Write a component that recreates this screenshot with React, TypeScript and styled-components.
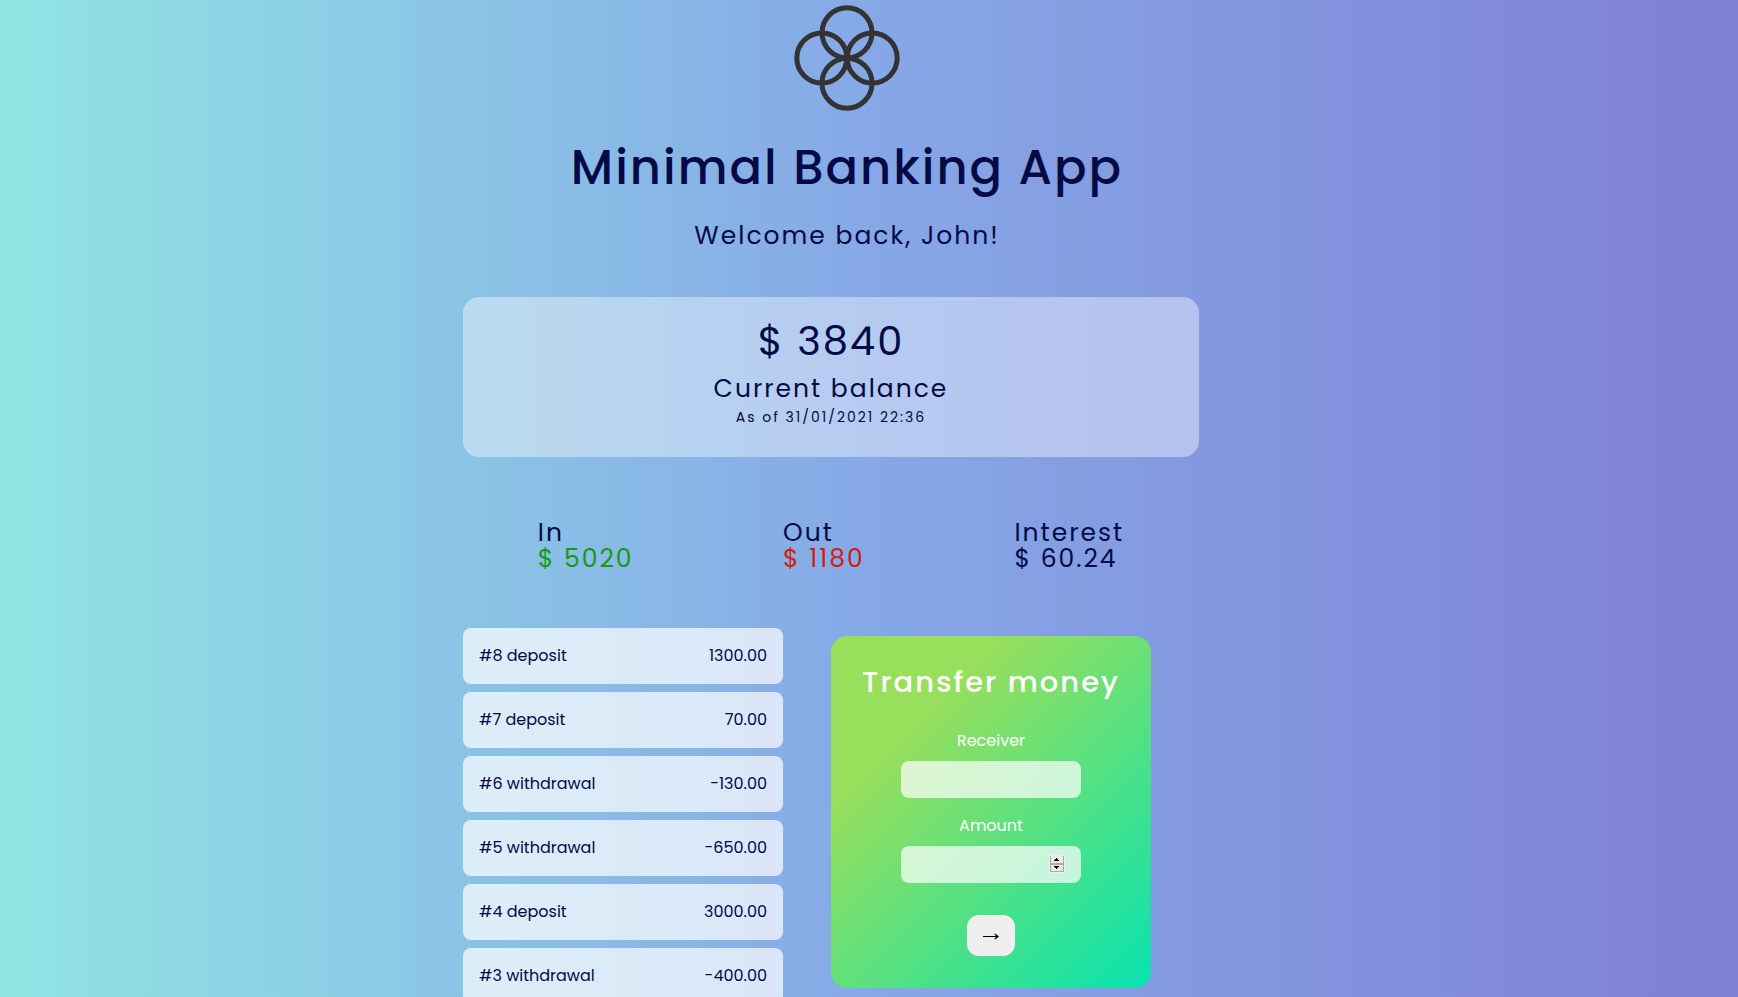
import React from 'react';
import styled, { createGlobalStyle } from 'styled-components';

const GlobalStyle = createGlobalStyle`
  *, *::before, *::after {
    box-sizing: border-box;
  }

  body {
    margin: 0;
    min-height: 100vh;
    color: #030a45;
    font-family: Poppins, 'Liberation Sans', sans-serif;
    font-size: 16px;
    line-height: 24px;
    background: linear-gradient(to right, #90e5e3, #86a8e7, #7f7fd5);
  }
`;

const Page = styled.main`
  display: flex;
  flex-direction: column;
  max-width: 812px;
  margin: 0 auto;
  padding-right: 44px;
`;

const Header = styled.header`
  display: flex;
  flex-direction: column;
  align-items: center;
  margin-bottom: 48px;
  text-align: center;
`;

const Logo = styled.svg`
  width: 116px;
  height: 116px;
  margin-bottom: 16px;
  fill: none;
  stroke: #333;
  stroke-width: 5;
`;

const Title = styled.h1`
  margin: 0 0 19px;
  font-size: 48px;
  font-weight: 500;
  line-height: 72px;
  letter-spacing: 2px;
`;

const Welcome = styled.p`
  margin: 0;
  font-size: 25px;
  line-height: 26px;
  letter-spacing: 2px;
`;

const BalanceCard = styled.section`
  min-height: 160px;
  margin-right: 32px;
  padding: 24px;
  border-radius: 16px;
  background: rgba(255, 255, 255, 0.4);
  text-align: center;
  letter-spacing: 2px;
`;

const BalanceValue = styled.p`
  margin: 0 0 15px;
  font-size: 40px;
  line-height: 40px;
`;

const BalanceLabel = styled.h2`
  margin: 0;
  font-size: 25px;
  font-weight: 400;
  line-height: 26px;
`;

const BalanceDate = styled.p`
  margin: 0;
  font-size: 14px;
  line-height: 30px;
`;

const Summary = styled.dl`
  display: flex;
  justify-content: space-around;
  margin: 63px 32px 56px 0;
  font-size: 25px;
  line-height: 26px;
  letter-spacing: 2px;
`;

const SummaryLabel = styled.dt``;

const SummaryValue = styled.dd<{ $color?: string }>`
  margin: 0;
  color: ${({ $color }) => $color ?? 'inherit'};
`;

const Columns = styled.div`
  display: grid;
  grid-template-columns: 320px 320px;
  align-items: start;
  gap: 48px;
`;

const Movements = styled.ul`
  display: flex;
  flex-direction: column;
  gap: 8px;
  margin: 0;
  padding: 0;
  list-style: none;
`;

const Movement = styled.li`
  display: flex;
  justify-content: space-between;
  padding: 16px;
  border-radius: 8px;
  background: rgba(255, 255, 255, 0.7);
`;

const TransferForm = styled.form`
  display: flex;
  flex-direction: column;
  align-items: center;
  margin-top: 8px;
  padding: 24px 24px 32px;
  border-radius: 16px;
  color: #fff;
  background: linear-gradient(135deg, #98df5b 25%, #08e2b0);
`;

const FormTitle = styled.h2`
  margin: 0 0 24px;
  font-size: 29px;
  font-weight: 500;
  line-height: 45px;
  letter-spacing: 2px;
  white-space: nowrap;
`;

const Label = styled.label`
  margin-bottom: 8px;
`;

const Field = styled.div`
  position: relative;
  width: 180px;
  margin-bottom: 16px;
`;

const Input = styled.input`
  display: block;
  width: 100%;
  height: 37px;
  padding: 8px 16px;
  border: 0;
  border-radius: 8px;
  color: #030a45;
  background: rgba(255, 255, 255, 0.7);
  font: inherit;
  appearance: textfield;

  &::-webkit-inner-spin-button {
    appearance: none;
  }
`;

const Stepper = styled.svg`
  position: absolute;
  top: 9px;
  right: 16px;
  width: 16px;
  height: 18px;
  pointer-events: none;
`;

const Submit = styled.button`
  display: flex;
  align-items: center;
  justify-content: center;
  width: 48px;
  height: 41px;
  margin-top: 16px;
  padding: 0;
  border: 0;
  border-radius: 12px;
  color: #000;
  background: #efefef;
`;

const ArrowIcon = styled.svg`
  width: 16px;
  height: 9px;
  fill: currentColor;
`;

const summary = [
  { label: 'In', value: '$ 5020', color: '#149a14' },
  { label: 'Out', value: '$ 1180', color: '#cf1d10' },
  { label: 'Interest', value: '$ 60.24' },
];

const movements = [
  { id: 8, type: 'deposit', amount: '1300.00' },
  { id: 7, type: 'deposit', amount: '70.00' },
  { id: 6, type: 'withdrawal', amount: '-130.00' },
  { id: 5, type: 'withdrawal', amount: '-650.00' },
  { id: 4, type: 'deposit', amount: '3000.00' },
  { id: 3, type: 'withdrawal', amount: '-400.00' },
];

export default function App() {
  return (
    <>
      <GlobalStyle />
      <Page>
        <Header>
          <Logo viewBox="0 0 116 116" aria-hidden="true">
            <circle cx="58" cy="32.8" r="25" />
            <circle cx="83.2" cy="58" r="25" />
            <circle cx="58" cy="83.2" r="25" />
            <circle cx="32.8" cy="58" r="25" />
          </Logo>
          <Title>Minimal Banking App</Title>
          <Welcome>Welcome back, John!</Welcome>
        </Header>

        <BalanceCard>
          <BalanceValue>$ 3840</BalanceValue>
          <BalanceLabel>Current balance</BalanceLabel>
          <BalanceDate>As of 31/01/2021 22:36</BalanceDate>
        </BalanceCard>

        <Summary>
          {summary.map(({ label, value, color }) => (
            <div key={label}>
              <SummaryLabel>{label}</SummaryLabel>
              <SummaryValue $color={color}>{value}</SummaryValue>
            </div>
          ))}
        </Summary>

        <Columns>
          <Movements>
            {movements.map(({ id, type, amount }) => (
              <Movement key={id}>
                <span>{`#${id} ${type}`}</span>
                <span>{amount}</span>
              </Movement>
            ))}
          </Movements>

          <TransferForm onSubmit={(event) => event.preventDefault()}>
            <FormTitle>Transfer money</FormTitle>
            <Label htmlFor="receiver">Receiver</Label>
            <Field>
              <Input id="receiver" type="text" />
            </Field>
            <Label htmlFor="amount">Amount</Label>
            <Field>
              <Input id="amount" type="number" />
              <Stepper viewBox="0 0 16 18" shapeRendering="crispEdges" aria-hidden="true">
                <rect width="16" height="18" fill="#efefef" />
                <path d="M1 1h14v16H1z" fill="#acacac" />
                <path d="M2 0h12v8H2zM2 10h12v6H2z" fill="#ebebeb" />
                <path d="M7 3h1v1h1v1h1v1H5V5h1V4h1zM5 11h5v1H9v1H8v1H7v-1H6v-1H5z" fill="#000" />
              </Stepper>
            </Field>
            <Submit type="submit" aria-label="Send transfer">
              <ArrowIcon viewBox="0 0 16 9" aria-hidden="true">
                <path d="M0 5h13L11.2 3l.8-.6L16 5.5 12 8.6l-.8-.6L13 6H0z" />
              </ArrowIcon>
            </Submit>
          </TransferForm>
        </Columns>
      </Page>
    </>
  );
}
